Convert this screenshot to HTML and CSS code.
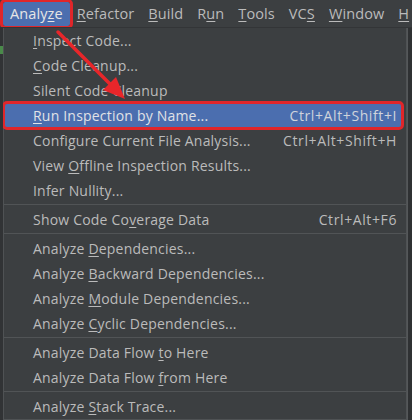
FILE: index.html
```html
<!DOCTYPE html>
<html>
<head>
<meta charset="utf-8">
<link rel="stylesheet" href="styles.css">
</head>
<body>
<div class="screen">
  <div class="menubar">
    <span class="top active">Analy<u>z</u>e</span>
    <span class="top"><u>R</u>efactor</span>
    <span class="top"><u>B</u>uild</span>
    <span class="top">R<u>u</u>n</span>
    <span class="top"><u>T</u>ools</span>
    <span class="top">VC<u>S</u></span>
    <span class="top"><u>W</u>indow</span>
    <span class="top last"><u>H</u></span>
  </div>
  <div class="body">
    <div class="gutter"><span class="green"></span></div>
    <div class="popup">
      <div class="item"><span><u>I</u>nspect Code...</span></div>
      <div class="item"><span><u>C</u>ode Cleanup...</span></div>
      <div class="item"><span>Silent Code Cleanup</span></div>
      <div class="item selected"><span><u>R</u>un Inspection by Name...</span><span class="key">Ctrl+Alt+Shift+I</span></div>
      <div class="item"><span>Configure Current File Analysis...</span><span class="key">Ctrl+Alt+Shift+H</span></div>
      <div class="item"><span>View <u>O</u>ffline Inspection Results...</span></div>
      <div class="item"><span>Infer Nullity...</span></div>
      <div class="sep"></div>
      <div class="item"><span>Show Code Co<u>v</u>erage Data</span><span class="key">Ctrl+Alt+F6</span></div>
      <div class="sep"></div>
      <div class="item"><span>Analyze <u>D</u>ependencies...</span></div>
      <div class="item"><span>Analyze <u>B</u>ackward Dependencies...</span></div>
      <div class="item"><span>Analyze <u>M</u>odule Dependencies...</span></div>
      <div class="item"><span>Analyze <u>C</u>yclic Dependencies...</span></div>
      <div class="sep"></div>
      <div class="item"><span>Analyze Data Flow <u>t</u>o Here</span></div>
      <div class="item"><span>Analyze Data Flow <u>f</u>rom Here</span></div>
      <div class="sep"></div>
      <div class="item"><span>Analyze <u>S</u>tack Trace...</span></div>
    </div>
    <div class="rightstrip"></div>
  </div>
  <svg class="arrow" width="140" height="110" viewBox="0 0 140 110">
    <line x1="58" y1="32" x2="114" y2="88" stroke="#e8262a" stroke-width="3.5" stroke-linecap="round"/>
    <polygon points="125,99 103,90 116,77" fill="#e8262a"/>
  </svg>
</div>
</body>
</html>
```
FILE: styles.css
```css
* { box-sizing: border-box; }
html, body { margin: 0; padding: 0; }
body {
  width: 412px;
  height: 420px;
  overflow: hidden;
  background: #2b2b2b;
  font-family: "Open Sans", "Noto Sans", sans-serif;
  font-size: 14px;
  color: #bbbbbb;
}
.screen { position: relative; width: 412px; height: 420px; }
u { text-decoration: underline; text-underline-offset: 2px; text-decoration-thickness: 1px; }
.menubar {
  height: 28px;
  background: #3c3f41;
  border-bottom: 1px solid #333537;
  display: flex;
  align-items: center;
  padding-left: 3px;
  font-size: 14.5px;
  letter-spacing: 0.1px;
  white-space: nowrap;
  overflow: hidden;
}
.top {
  padding: 0 7px;
  height: 24px;
  line-height: 24px;
  flex: none;
}
.top.active {
  background: #4b6eaf;
  color: #e6e6e6;
  outline: 3px solid #e0262a;
  border-radius: 2px;
  padding: 0 7px;
}
.body { display: flex; height: 392px; }
.gutter { width: 3px; background: #313335; position: relative; }
.green { position: absolute; left: 0; top: 18px; width: 3px; height: 8px; background: #4a8a4a; }
.popup {
  width: 404px;
  background: #3c3f41;
  border: 1px solid #4f5254;
  border-top: none;
  padding: 0;
  display: flex;
  flex-direction: column;
}
.rightstrip { flex: 1; background: #2f3133; border-left: 1px solid #55585a; }
.item {
  height: 25px;
  flex: none;
  display: flex;
  align-items: center;
  justify-content: space-between;
  padding: 0 9px 1px 29px;
  white-space: nowrap;
  letter-spacing: 0.2px;
}
.item .key { color: #bbbbbb; letter-spacing: 0.6px; }
.item.selected {
  background: #4b6eaf;
  color: #e0e2e6;
  outline: 3px solid #e0262a;
  outline-offset: -1px;
  border-radius: 3px;
  margin: 0 4px 0 0;
  padding-right: 5px;
}
.item.selected .key { color: #d0d4dc; }
.sep { height: 1px; flex: none; background: #515456; margin: 1px 0 2px 0; }
.arrow { position: absolute; left: 0; top: 0; }
```
